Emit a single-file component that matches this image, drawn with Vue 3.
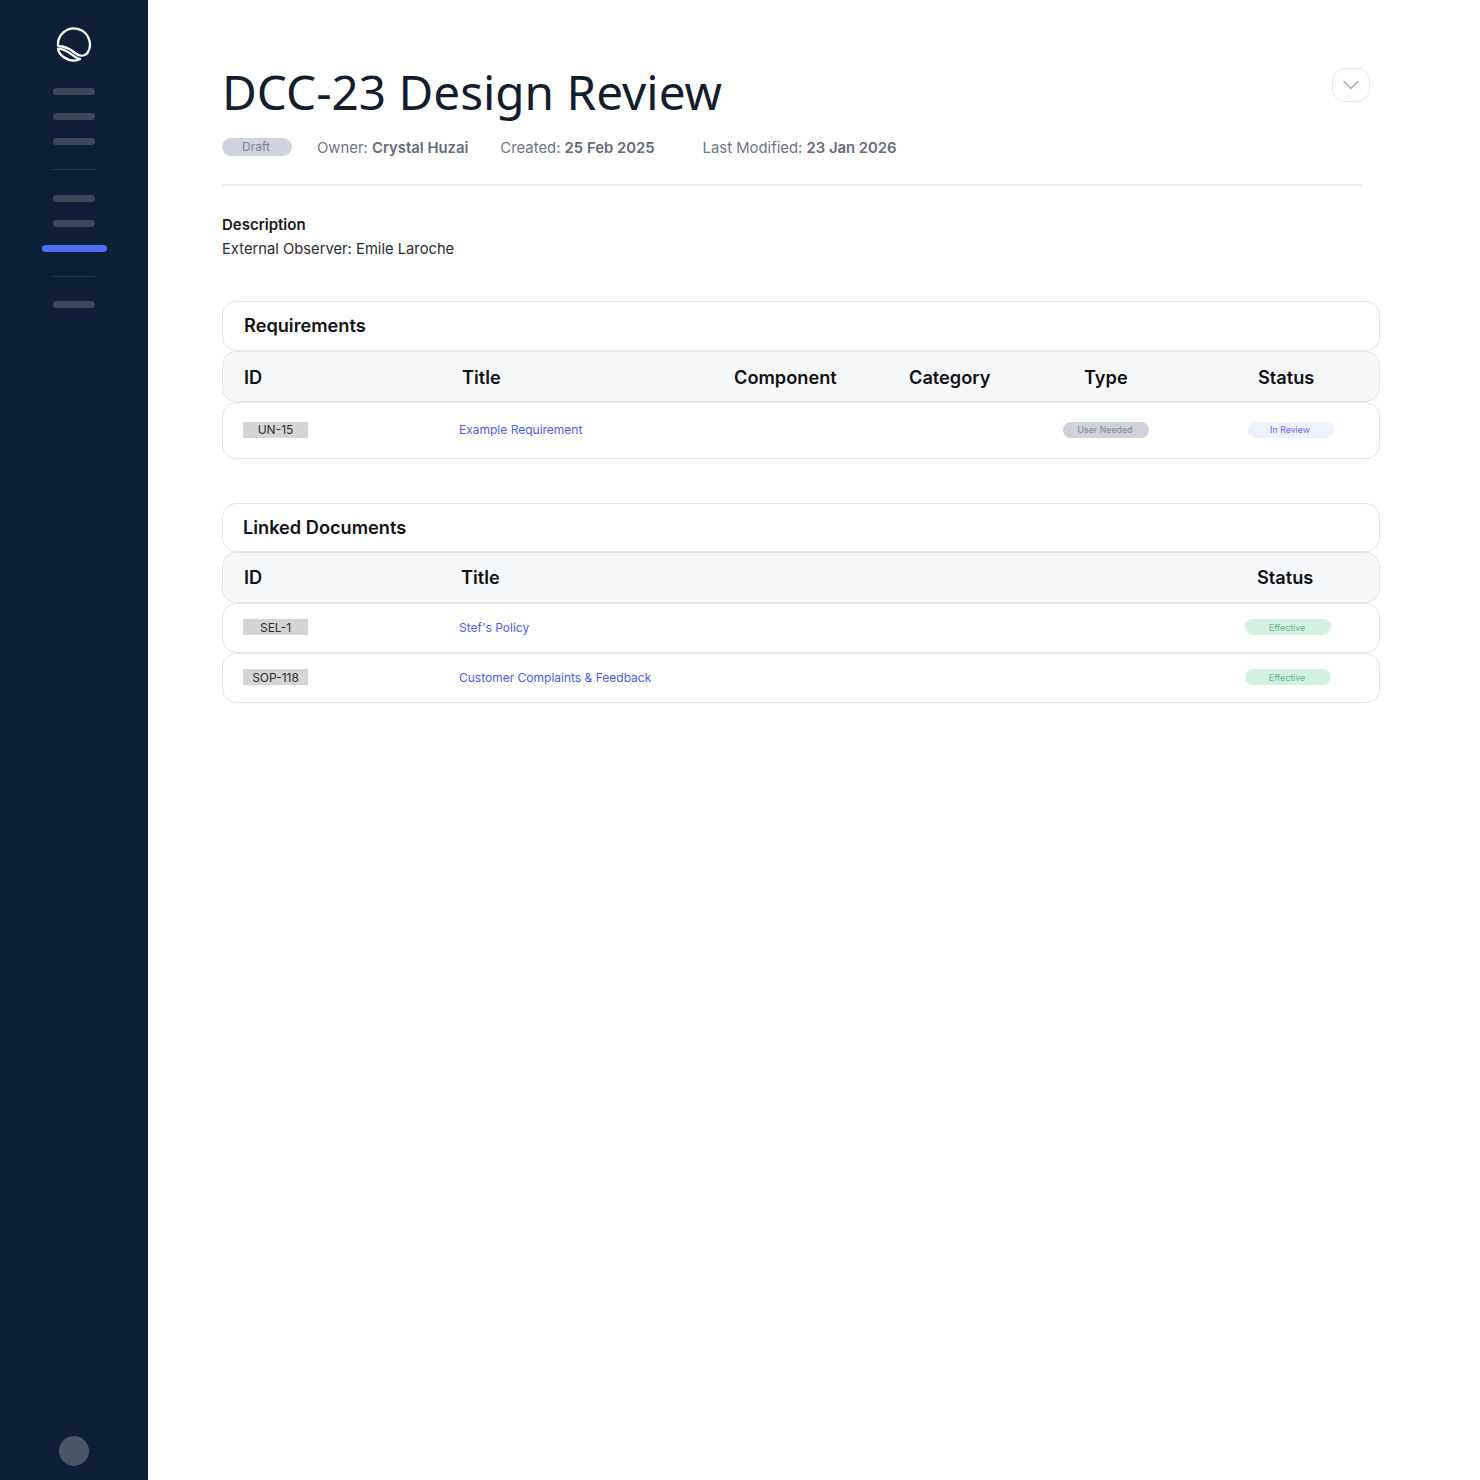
<script setup>
const navTop = 3
const navMid = 2
const reqRows = [{ id: 'UN-15', title: 'Example Requirement', type: 'User Needed', status: 'In Review' }]
const docRows = [
  { id: 'SEL-1', title: "Stef's Policy", status: 'Effective' },
  { id: 'SOP-118', title: 'Customer Complaints & Feedback', status: 'Effective' },
]
</script>

<template>
  <div class="page">
    <aside class="sidebar">
      <svg class="logo" viewBox="56 26 38 38" width="38" height="38" fill="none" stroke="#fff" stroke-width="2.300">
        <path d="M59 46 A16 16 0 1 1 88.500 53 C85 57 80 56 76 53 C71 49 64 46 59 46 Z" stroke-linejoin="round" />
        <path d="M59 49 C60 55 68 61 76 60.500 C79 60 81 59 81 59 C76 58 72 53 66 50.500 C63 49 60 48 59 49 Z" stroke-linejoin="round" />
      </svg>
      <nav class="nav">
        <span v-for="n in navTop" :key="'a' + n" class="nav-bar"></span>
        <span class="nav-line"></span>
        <span v-for="n in navMid" :key="'b' + n" class="nav-bar"></span>
        <span class="nav-bar active"></span>
        <span class="nav-line second"></span>
        <span class="nav-bar"></span>
      </nav>
      <div class="avatar"></div>
    </aside>

    <main class="main">
      <header class="title-row">
        <h1>DCC-23 Design Review</h1>
        <button type="button" class="toggle" aria-label="Collapse">
          <svg viewBox="0 0 18 10" width="18" height="10" fill="none" stroke="#a9adba" stroke-width="1.500">
            <path d="M1.500 1 L9 8.500 L16.500 1" />
          </svg>
        </button>
      </header>

      <div class="meta">
        <span class="pill draft">Draft</span>
        <span class="owner">Owner: <b>Crystal Huzai</b></span>
        <span class="created">Created: <b>25 Feb 2025</b></span>
        <span class="modified">Last Modified: <b>23 Jan 2026</b></span>
      </div>

      <hr class="divider" />

      <section class="description">
        <h2>Description</h2>
        <p>External Observer: Emile Laroche</p>
      </section>

      <section class="card-group first">
        <div class="box heading">Requirements</div>
        <div class="box head req-head">
          <span>ID</span>
          <span>Title</span>
          <span>Component</span>
          <span>Category</span>
          <span>Type</span>
          <span>Status</span>
        </div>
        <div v-for="row in reqRows" :key="row.id" class="box row req-row">
          <span class="tag">{{ row.id }}</span>
          <a class="link">{{ row.title }}</a>
          <span class="pill small grey">{{ row.type }}</span>
          <span class="pill small blue">{{ row.status }}</span>
        </div>
      </section>

      <section class="card-group second-group">
        <div class="box heading docs">Linked Documents</div>
        <div class="box head doc-head">
          <span>ID</span>
          <span>Title</span>
          <span>Status</span>
        </div>
        <div v-for="row in docRows" :key="row.id" class="box row doc-row">
          <span class="tag">{{ row.id }}</span>
          <a class="link">{{ row.title }}</a>
          <span class="pill small green">{{ row.status }}</span>
        </div>
      </section>
    </main>
  </div>
</template>

<style>
html,
body {
  margin: 0;
  background: #fff;
}
</style>

<style scoped>
.page {
  display: flex;
  min-height: 100vh;
  font-family: Inter, "Liberation Sans", sans-serif;
  color: #15171c;
}

.sidebar {
  width: 148px;
  flex: none;
  background: #0e1f38;
  display: flex;
  flex-direction: column;
  align-items: center;
  padding: 26px 0 14px;
  box-sizing: border-box;
}
.logo {
  display: block;
}
.nav {
  margin-top: 24px;
  display: flex;
  flex-direction: column;
  align-items: center;
  gap: 18px;
}
.nav-bar {
  width: 42px;
  height: 7px;
  border-radius: 4px;
  background: #3a4858;
}
.nav-bar.active {
  width: 65px;
  background: #4f6ef7;
}
.nav-line {
  width: 42px;
  height: 1px;
  margin: 6px 0 7px;
  background: #2a3a50;
}
.nav-line.second {
  margin: 6px 0 6px;
}
.avatar {
  margin-top: auto;
  width: 30px;
  height: 30px;
  border-radius: 50%;
  background: #4a5666;
}

.main {
  flex: 1;
  padding: 63px 100px 0 74px;
  min-width: 0;
}

.title-row {
  display: flex;
  justify-content: space-between;
  align-items: flex-start;
  padding-right: 10px;
}
h1 {
  margin: 0;
  font-family: "Noto Sans", sans-serif;
  font-weight: 400;
  font-size: 47.700px;
  line-height: 58px;
  color: #141d2e;
}
.toggle {
  width: 38px;
  height: 34px;
  margin-top: 5px;
  padding: 0;
  background: #fff;
  border: 1px solid #e8e9ee;
  border-radius: 13px;
  display: flex;
  align-items: center;
  justify-content: center;
}

.meta {
  margin-top: 17px;
  height: 18px;
  display: flex;
  align-items: flex-start;
  font-size: 14.850px;
  line-height: 18px;
  color: #6e7583;
}
.meta b {
  font-weight: 600;
  color: #646b79;
}
.owner,
.created,
.modified {
  margin-top: 1px;
}
.owner {
  margin-left: 25px;
}
.created {
  margin-left: 32px;
}
.modified {
  margin-left: 48px;
}

.pill {
  display: flex;
  align-items: center;
  justify-content: center;
  border-radius: 9px;
  box-sizing: border-box;
  padding-right: 2px;
}
.draft {
  width: 70px;
  height: 18px;
  background: #cfd3dc;
  color: #7d8390;
  font-size: 12px;
}
.small {
  width: 86px;
  height: 16px;
  font-size: 8.800px;
}
.grey {
  background: #cfd2da;
  color: #7f8591;
}
.blue {
  background: #eef1ff;
  color: #5b6cf0;
}
.green {
  background: #d2f1e1;
  color: #5fb48c;
}

.divider {
  margin: 28px 0 0;
  width: 1140px;
  height: 2px;
  border: 0;
  background: #eef0f3;
}

.description {
  margin-top: 29px;
  line-height: 20px;
}
.description h2 {
  margin: 0;
  font-size: 15px;
  line-height: 20px;
  font-weight: 600;
}
.description p {
  margin: 4px 0 0;
  font-size: 14.750px;
  color: #2a2d33;
}

.card-group {
  display: flex;
  flex-direction: column;
}
.first {
  margin-top: 42px;
}
.second-group {
  margin-top: 44px;
}

.box {
  box-sizing: border-box;
  border: 1px solid #e4e5ea;
  border-radius: 14px;
  background: #fff;
}
.heading {
  height: 50px;
  padding-left: 21px;
  padding-bottom: 2px;
  display: flex;
  align-items: center;
  font-size: 18.200px;
  font-weight: 600;
  color: #111318;
}
.heading.docs {
  height: 49px;
  padding-left: 20px;
}
.head {
  height: 51px;
  display: grid;
  align-items: center;
  padding-left: 21px;
  background: #f7f8fa;
  font-size: 18.200px;
  font-weight: 600;
  color: #0f1115;
}
.doc-head {
  padding-bottom: 2px;
  grid-template-columns: 217px 796px auto;
}
.req-head {
  grid-template-columns: 218px 272px 175px 175px 174px auto;
}
.row {
  display: grid;
  align-items: center;
  padding-left: 20px;
  padding-bottom: 2px;
  font-size: 12px;
}
.req-row {
  height: 57px;
  grid-template-columns: 216px 604px 185px 86px;
}
.doc-row {
  height: 50px;
  grid-template-columns: 216px 786px 86px;
}
.tag {
  width: 65px;
  height: 16px;
  display: flex;
  align-items: center;
  justify-content: center;
  background: #d4d4d4;
  color: #2b2d31;
  font-size: 12px;
}
.link {
  color: #4a5cf5;
  font-size: 12px;
}
</style>
